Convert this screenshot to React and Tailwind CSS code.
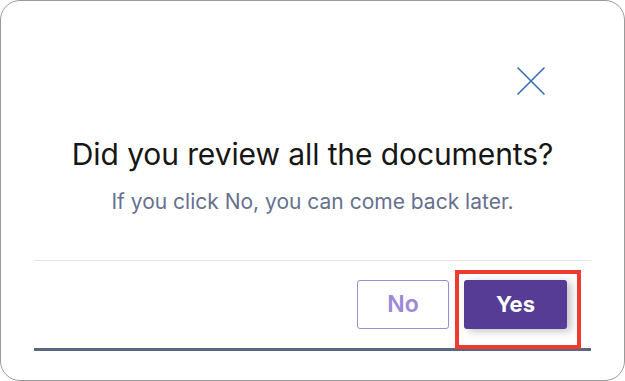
import { X } from 'lucide-react';

const font = { fontFamily: 'Inter, "Liberation Sans", sans-serif' };

export default function App() {
  return (
    <div className="w-[625px] h-[381px] bg-white" style={font}>
      <div className="relative w-full h-full bg-white border border-[#9a9a9a] rounded-[20px] px-[33px] flex flex-col">
        {/* close */}
        <div className="flex justify-end pt-[66px] pr-[46px]">
          <button className="w-[28px] h-[28px] text-[#2f6db5]">
            <svg width="28" height="28" viewBox="0 0 28 28" fill="none">
              <path d="M0.5 0.5 L27.5 27.5 M27.5 0.5 L0.5 27.5" stroke="currentColor" strokeWidth="1.5" />
            </svg>
          </button>
        </div>

        <h2 className="mt-[41px] text-center text-[30px] leading-[37px] text-[#161616] font-normal tracking-[-0.1px]">
          Did you review all the documents?
        </h2>
        <p className="mt-[15px] text-center text-[21px] leading-[28px] text-[#66708f]">
          If you click No, you can come back later.
        </p>

        <div className="mt-[44px] border-t border-[#e4e4e7]" />

        <div className="flex justify-end gap-[15px] pt-[19px] pr-[24px]">
          <button className="w-[92px] h-[49px] rounded-[3px] border border-[#9f8ad6] bg-white text-[23px] font-semibold text-[#9d88d4]">
            No
          </button>
          <button className="w-[103px] h-[49px] rounded-[3px] bg-[#563c94] text-[22px] font-bold text-white shadow-[4px_2px_8px_rgba(0,0,0,0.25)]">
            Yes
          </button>
        </div>

        <div className="mt-[19px] h-[3px] bg-[#5b6584]" />

        {/* highlight annotation */}
        <div className="absolute left-[454px] top-[269px] w-[126px] h-[79px] border-[4px] border-[#ee3b30]" />
      </div>
    </div>
  );
}
